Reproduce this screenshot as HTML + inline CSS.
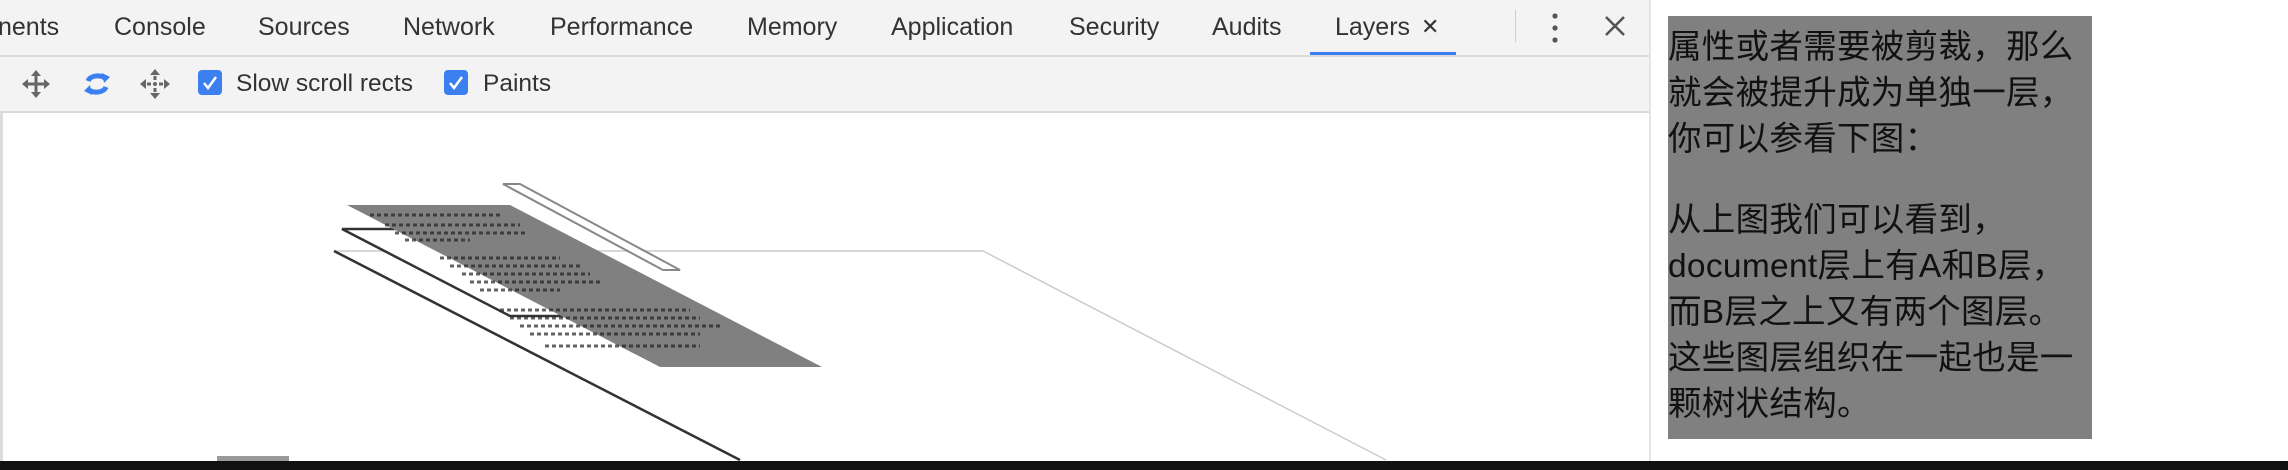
<!DOCTYPE html>
<html><head><meta charset="utf-8"><style>
body{margin:0;width:2288px;height:470px;overflow:hidden;background:#fff;font-family:"Liberation Sans","Noto Sans CJK SC",sans-serif;position:relative}
.tabbar{position:absolute;left:0;top:0;width:1650px;height:55px;background:#f3f3f3;border-bottom:2px solid #dadada}
.tab{position:absolute;top:13px;font-size:25px;color:#333;white-space:nowrap}
.tool{position:absolute;left:0;top:57px;width:1650px;height:54px;background:#f3f3f3;border-bottom:2px solid #dadada}
.lbl{position:absolute;top:13px;font-size:24.5px;color:#333}
.cb{position:absolute;top:13px;width:24px;height:25px;background:#3b7ff0;border-radius:4px}
.gray{position:absolute;left:1668px;top:16px;width:424px;height:423px;background:#808080;color:#111;font-size:33.5px;line-height:46px;padding-top:9px;box-sizing:border-box;letter-spacing:0.3px}
</style></head><body>
<div class="tabbar">
<span class="tab" style="left:-2px">nents</span>
<span class="tab" style="left:114px">Console</span>
<span class="tab" style="left:258px">Sources</span>
<span class="tab" style="left:403px">Network</span>
<span class="tab" style="left:550px">Performance</span>
<span class="tab" style="left:747px">Memory</span>
<span class="tab" style="left:891px">Application</span>
<span class="tab" style="left:1069px">Security</span>
<span class="tab" style="left:1212px">Audits</span>
<span class="tab" style="left:1335px">Layers</span>
<span class="tab" style="left:1421px;font-size:22px;top:14px">✕</span>
<div style="position:absolute;left:1310px;top:52px;width:146px;height:3px;background:#3b7ff0"></div>
<div style="position:absolute;left:1515px;top:10px;width:1px;height:32px;background:#ccc"></div>
<svg style="position:absolute;left:1548px;top:12px" width="14" height="32"><circle cx="7" cy="4" r="2.6" fill="#555"/><circle cx="7" cy="16" r="2.6" fill="#555"/><circle cx="7" cy="28" r="2.6" fill="#555"/></svg>
<svg style="position:absolute;left:1604px;top:15px" width="22" height="22"><path d="M2 2L20 20M20 2L2 20" stroke="#555" stroke-width="2.6"/></svg>
</div>
<div class="tool">
<svg style="position:absolute;left:20px;top:11px" width="32" height="32" viewBox="0 0 32 32"><path d="M16 2l5 6h-3.5v6.5H24V11l6 5-6 5v-3.5h-6.5V24H21l-5 6-5-6h3.5v-6.5H8V21l-6-5 6-5v3.5h6.5V8H11z" fill="#666"/></svg>
<svg style="position:absolute;left:80px;top:10px" width="34" height="34" viewBox="0 0 34 34"><path d="M8 14a10 7 0 0 1 18-2" fill="none" stroke="#3b7ff0" stroke-width="5"/><path d="M22 6l8 4-6 6z" fill="#3b7ff0"/><path d="M26 20a10 7 0 0 1-18 2" fill="none" stroke="#3b7ff0" stroke-width="5"/><path d="M12 28l-8-4 6-6z" fill="#3b7ff0"/></svg>
<svg style="position:absolute;left:139px;top:11px" width="32" height="32" viewBox="0 0 32 32"><g fill="#666"><path d="M16 1l5 6H11z"/><path d="M16 31l5-6H11z"/><path d="M1 16l6 5V11z"/><path d="M31 16l-6 5V11z"/><rect x="14.5" y="8" width="3" height="4"/><rect x="14.5" y="20" width="3" height="4"/><rect x="8" y="14.5" width="4" height="3"/><rect x="20" y="14.5" width="4" height="3"/><circle cx="16" cy="16" r="2"/></g></svg>
<div class="cb" style="left:198px"><svg width="24" height="25"><path d="M6 13l4 5 8-11" fill="none" stroke="#fff" stroke-width="2.5"/></svg></div>
<span class="lbl" style="left:236px">Slow scroll rects</span>
<div class="cb" style="left:444px"><svg width="24" height="25"><path d="M6 13l4 5 8-11" fill="none" stroke="#fff" stroke-width="2.5"/></svg></div>
<span class="lbl" style="left:483px">Paints</span>
</div>
<div style="position:absolute;left:0;top:113px;width:3px;height:350px;background:#ddd"></div>
<div style="position:absolute;left:1649px;top:0;width:2px;height:462px;background:#e4e4e4"></div>
<svg style="position:absolute;left:0;top:113px" width="1650" height="350" viewBox="0 113 1650 350">
<path d="M334 251H983L1386 460" fill="none" stroke="#ccc" stroke-width="1.5"/>
<path d="M334 251L740 460" stroke="#333" stroke-width="2.5"/>
<path d="M342 229H420L565 316H510Z" fill="#fff" stroke="#333" stroke-width="2.5"/>
<path d="M347 205H510L822 367H660Z" fill="#808080"/>
<g stroke="#222" stroke-width="3" stroke-dasharray="4 3" opacity="0.7">
<path d="M370 215H500M385 225H520M395 233H525M405 240H470M440 258H560M450 266H580M462 274H590M470 282H600M480 290H560M500 310H690M510 318H700M520 326H720M530 334H700M545 346H700"/>
</g>
<path d="M503 184H520L680 270H663Z" fill="#fff" stroke="#888" stroke-width="2"/>
<rect x="217" y="456" width="72" height="6" fill="#999"/>
</svg>
<div class="gray">属性或者需要被剪裁，那么<br>就会被提升成为单独一层，<br>你可以参看下图：<div style="height:35px"></div>从上图我们可以看到，<br>document层上有A和B层，<br>而B层之上又有两个图层。<br>这些图层组织在一起也是一<br>颗树状结构。</div>
<div style="position:absolute;left:0;top:461px;width:2288px;height:9px;background:#111"></div>
</body></html>
